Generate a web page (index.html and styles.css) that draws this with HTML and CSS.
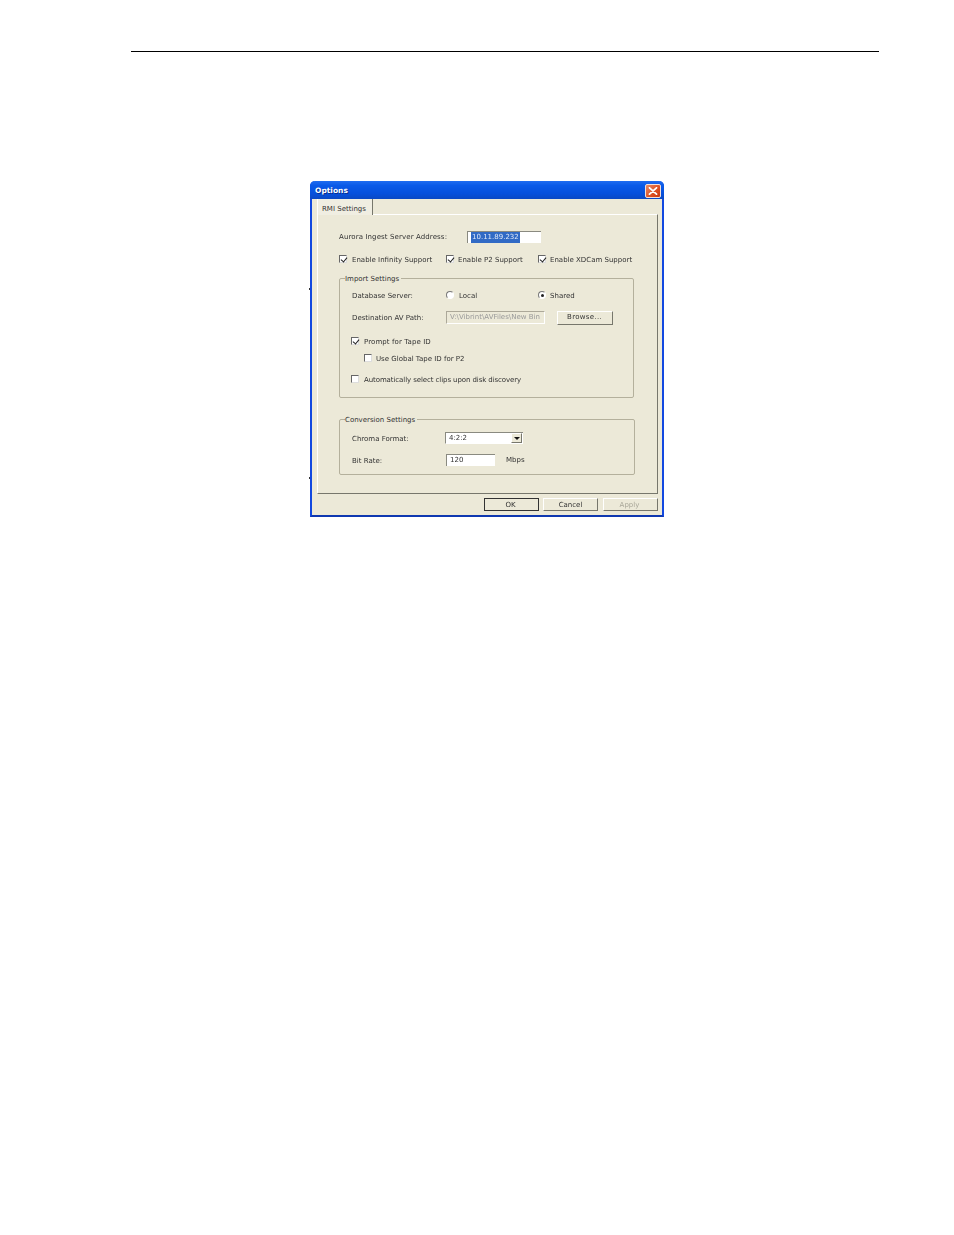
FILE: index.html
```html
<!DOCTYPE html>
<html lang="en">
<head>
    <meta charset="UTF-8">
    <title>Options</title>
    <link rel="stylesheet" href="styles.css">
</head>
<body>
    <div class="page_rule"></div>
    <div class="dialog">
        <div class="titlebar">
            <span class="title">Options</span>
            <span class="close">
                <svg width="10" height="8" viewBox="0 0 10 8"><path d="M1.5 .8 L8.5 7.2 M8.5 .8 L1.5 7.2" stroke="#fff" stroke-width="1.8" stroke-linecap="round" fill="none"/></svg>
            </span>
        </div>
        <div class="tabs"><span class="tab">RMI Settings</span></div>
        <div class="panel">
            <div class="row address">
                <span class="address_label">Aurora Ingest Server Address:</span>
                <span class="input address_input"><span class="selected">10.11.89.232</span></span>
            </div>
            <div class="row support">
                <label class="check_item support_first"><span class="check on"></span>Enable Infinity Support</label>
                <label class="check_item support_second narrow"><span class="check on"></span>Enable P2 Support</label>
                <label class="check_item narrow"><span class="check on"></span>Enable XDCam Support</label>
            </div>

            <div class="group import">
                <span class="legend">Import Settings</span>
                <div class="row">
                    <span class="label">Database Server:</span>
                    <label class="check_item radio_first"><span class="radio"></span>Local</label>
                    <label class="check_item narrow"><span class="radio on"></span>Shared</label>
                </div>
                <div class="row dest">
                    <span class="label">Destination AV Path:</span>
                    <span class="input disabled path_input">V:\Vibrint\AVFiles\New Bin</span>
                    <span class="button browse">Browse...</span>
                </div>
                <div class="row prompt">
                    <label class="check_item prompt_text"><span class="check on"></span>Prompt for Tape ID</label>
                </div>
                <div class="row global">
                    <label class="check_item narrow"><span class="check"></span>Use Global Tape ID for P2</label>
                </div>
                <div class="row auto">
                    <label class="check_item auto_text"><span class="check"></span>Automatically select clips upon disk discovery</label>
                </div>
            </div>

            <div class="group conversion">
                <span class="legend">Conversion Settings</span>
                <div class="row chroma">
                    <span class="label chroma_label">Chroma Format:</span>
                    <span class="input select">4:2:2<span class="arrow"></span></span>
                </div>
                <div class="row bitrate">
                    <span class="label">Bit Rate:</span>
                    <span class="input rate_input">120</span>
                    <span class="unit">Mbps</span>
                </div>
            </div>
        </div>
        <div class="footer">
            <span class="button default">OK</span>
            <span class="button">Cancel</span>
            <span class="button off">Apply</span>
        </div>
    </div>
</body>
</html>
```
FILE: styles.css
```css
* {
    margin: 0;
    padding: 0;
    box-sizing: border-box;
}
body {
    background-color: #fff;
    font-family: "DejaVu Sans", sans-serif;
    font-size: 7px;
    color: #333;
}
.page_rule {
    width: 748px;
    height: 1px;
    margin: 51px 0 0 131px;
    background-color: #000;
}
.dialog {
    position: relative;
    width: 354px;
    height: 336px;
    margin: 129px 0 0 310px;
    background-color: #ece9d8;
    border: 2px solid #1248e0;
    border-top: 0;
    border-bottom-color: #0f38b0;
    border-radius: 5px 5px 0 0;
    filter: blur(0.3px);
}
/* 左边框外的两个小黑点 */
.dialog::before,
.dialog::after {
    content: "";
    position: absolute;
    left: -3px;
    width: 1px;
    height: 2px;
    background-color: #333;
}
.dialog::before {
    top: 107px;
}
.dialog::after {
    top: 296px;
}
.titlebar {
    display: flex;
    align-items: center;
    justify-content: space-between;
    height: 18px;
    margin: 0 -2px;
    padding: 1px 3px 0 5px;
    border-radius: 5px 5px 0 0;
    background: linear-gradient(#1f6cf0 0, #0a5ae8 25%, #0650dc 70%, #0a48c4 100%);
}
.title {
    color: #fff;
    font-weight: bold;
    font-size: 7.5px;
    text-shadow: 1px 1px 0 #0a2f90;
}
.close {
    display: flex;
    align-items: center;
    justify-content: center;
    width: 16px;
    height: 14px;
    border: 1px solid #f4e0d8;
    border-radius: 2px;
    background: linear-gradient(135deg, #e88a68, #dc4f22 60%, #c83a12);
}
.tabs {
    height: 15px;
    padding-left: 5px;
}
.tab {
    display: block;
    width: 56px;
    height: 16px;
    padding: 1px 0 0 4px;
    line-height: 18px;
    background-color: #f0eee2;
    border-left: 1px solid #fff;
    border-right: 1px solid #77776c;
    position: relative;
}
.panel {
    width: 341px;
    height: 280px;
    margin-left: 5px;
    padding: 16px 0 0 21px;
    border-top: 1px solid #fff;
    border-left: 1px solid #fff;
    border-right: 1px solid #77776c;
    border-bottom: 1px solid #77776c;
}
.row {
    display: flex;
    align-items: center;
    height: 12px;
}
.address_label {
    width: 128px;
    letter-spacing: 0.11px;
}
.input {
    display: block;
    height: 12px;
    padding-left: 3px;
    line-height: 11px;
    background-color: #fff;
    border-top: 1px solid #8a8a80;
    border-left: 1px solid #8a8a80;
}
.address_input {
    width: 74px;
}
.selected {
    display: inline-block;
    padding: 0 1px;
    background-color: #316ac5;
    color: #dfe8f8;
}
.support {
    margin-top: 10px;
}
.support_first {
    width: 107px;
}
.support_second {
    width: 92px;
}
.check_item {
    display: flex;
    align-items: center;
    gap: 5px;
    padding-top: 1px;
    white-space: nowrap;
}
.narrow {
    gap: 4px;
}
.prompt_text {
    letter-spacing: 0.1px;
}
.auto_text {
    letter-spacing: -0.09px;
}
.check {
    display: block;
    width: 8px;
    height: 8px;
    margin-top: -1px;
    background-color: #fff;
    border: 1px solid #ddd;
    border-top-color: #666;
    border-left-color: #666;
    position: relative;
}
.check.on::after {
    content: "";
    position: absolute;
    left: 1.5px;
    top: 0;
    width: 3px;
    height: 5px;
    border-right: 1.5px solid #222;
    border-bottom: 1.5px solid #222;
    transform: rotate(40deg);
}
.radio {
    display: block;
    width: 8px;
    height: 8px;
    margin-top: -1px;
    background-color: #fff;
    border: 1px solid #fff;
    border-top-color: #777;
    border-left-color: #777;
    border-radius: 50%;
    position: relative;
}
.radio.on::after {
    content: "";
    position: absolute;
    left: 1.5px;
    top: 1.5px;
    width: 3px;
    height: 3px;
    border-radius: 50%;
    background-color: #222;
}
.group {
    position: relative;
    padding: 10px 0 0 11px;
    border: 1px solid #b4b09c;
    border-radius: 2px;
}
.legend {
    position: absolute;
    left: 5px;
    top: -5px;
    height: 10px;
    padding: 0 2px 0 0;
    line-height: 10px;
    background-color: #ece9d8;
}
.import {
    width: 295px;
    height: 120px;
    margin-top: 13px;
}
.conversion {
    width: 296px;
    height: 56px;
    margin-top: 21px;
    padding-top: 12px;
}
.label {
    width: 95px;
    padding: 1px 0 0 1px;
}
.chroma_label {
    width: 94px;
}
.radio_first {
    width: 92px;
}
.dest {
    height: 14px;
    margin-top: 10px;
    line-height: 12px;
}
.dest .label {
    padding-top: 0;
}
.path_input {
    width: 99px;
    height: 13px;
    margin-bottom: 1px;
    background-color: #ece9d8;
    border: 1px solid #aca899;
    border-right-color: #fff;
    border-bottom-color: #fff;
    color: #999;
    white-space: nowrap;
    overflow: hidden;
}
.browse {
    width: 56px;
    height: 14px;
    margin-left: 12px;
    padding: 0 1px 2px 0;
    letter-spacing: 0.3px;
}
.button {
    display: flex;
    align-items: center;
    justify-content: center;
    background-color: #ece9d8;
    border: 1px solid #fff;
    border-right-color: #77776c;
    border-bottom-color: #77776c;
}
.prompt {
    margin-top: 10px;
}
.global {
    margin-top: 5px;
    padding-left: 13px;
}
.auto {
    margin-top: 9px;
}
.select {
    width: 78px;
    padding-right: 1px;
    display: flex;
    align-items: center;
    justify-content: space-between;
    border-bottom: 1px solid #fff;
}
.arrow {
    display: block;
    width: 11px;
    height: 10px;
    background-color: #ece9d8;
    border: 1px solid #fff;
    border-right-color: #77776c;
    border-bottom-color: #77776c;
    position: relative;
}
.arrow::after {
    content: "";
    position: absolute;
    left: 2px;
    top: 3px;
    border-top: 3px solid #111;
    border-left: 3px solid transparent;
    border-right: 3px solid transparent;
}
.bitrate {
    margin-top: 10px;
}
.rate_input {
    width: 49px;
}
.unit {
    margin-left: 11px;
}
.footer {
    display: flex;
    justify-content: flex-end;
    gap: 4px;
    margin-top: 4px;
    padding-right: 4px;
}
.footer .button {
    width: 55px;
    height: 13px;
}
.footer .default {
    padding-right: 2px;
    border: 1px solid #333;
}
.footer .off {
    margin-left: 1px;
    padding-right: 2px;
    color: #a8a698;
}
```
